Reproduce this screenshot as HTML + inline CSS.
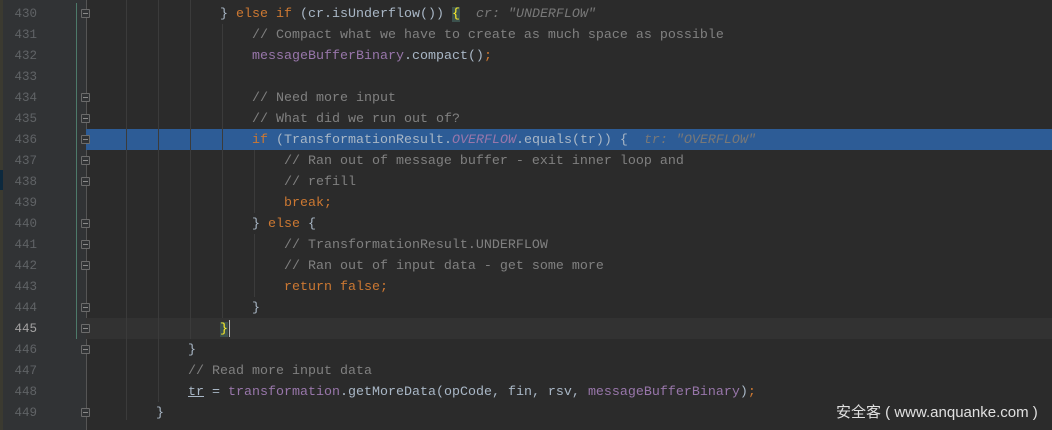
<!DOCTYPE html>
<html><head><meta charset="utf-8"><style>
*{margin:0;padding:0}
body{width:1052px;height:430px;background:#2b2b2b;position:relative;overflow:hidden;font-family:"Liberation Mono",monospace;font-size:13.33px}
.gut{position:absolute;left:0;top:0;width:86px;height:430px;background:#313335}
.strip{position:absolute;left:0;width:3px}
.ln{position:absolute;left:0;width:37px;text-align:right;color:#606366;font-size:12.5px;height:21px;line-height:21px;padding-top:1px}
.row{position:absolute;left:86px;right:0;height:21px}
.code{position:absolute;left:124px;white-space:pre;color:#a9b7c6;line-height:21px;height:21px;padding-top:1px}
.k{color:#cc7832}.c{color:#808080}.f{color:#9876aa}.i{color:#9876aa;font-style:italic}.h{color:#787878;font-style:italic}
.g{position:absolute;width:1px;background:#3b3b3b}
.fold{position:absolute;left:81px;width:9px;height:9px;border:1px solid #6b6b6b;border-radius:1px;box-sizing:border-box;background:#313335}
.fold:after{content:"";position:absolute;left:1px;top:3px;width:5px;height:1px;background:#8a8a8a}
</style></head><body>
<div class="gut"></div>
<div class="strip" style="top:0;height:170px;background:#3b3a30"></div>
<div class="strip" style="top:170px;height:20px;background:#0d293e"></div>
<div class="strip" style="top:190px;height:240px;background:#3b3a30"></div>
<div style="position:absolute;left:76px;top:3px;width:1px;height:336px;background:#4d7a6a"></div>
<div style="position:absolute;left:86px;top:0;width:1px;height:430px;background:#555"></div>
<div class="row" style="top:129px;background:#2d5c96"></div>
<div class="row" style="top:318px;background:#323232"></div>
<div class="g" style="left:126px;top:0;height:420px"></div>
<div class="g" style="left:158px;top:0;height:402px"></div>
<div class="g" style="left:190px;top:0;height:339px"></div>
<div class="g" style="left:222px;top:24px;height:294px"></div>
<div class="g" style="left:254px;top:150px;height:63px"></div>
<div class="g" style="left:254px;top:234px;height:63px"></div>
<div class="fold" style="top:9px"></div>
<div class="fold" style="top:93px"></div>
<div class="fold" style="top:114px"></div>
<div class="fold" style="top:135px"></div>
<div class="fold" style="top:156px"></div>
<div class="fold" style="top:177px"></div>
<div class="fold" style="top:219px"></div>
<div class="fold" style="top:240px"></div>
<div class="fold" style="top:261px"></div>
<div class="fold" style="top:303px"></div>
<div class="fold" style="top:324px"></div>
<div class="fold" style="top:345px"></div>
<div class="fold" style="top:408px"></div>

<div class="ln" style="top:3px">430</div><div class="code" style="top:3px">            } <span class="k">else if</span> (cr.isUnderflow()) <span style="background:#3b514d;color:#ffef28">{</span>  <span class="h">cr: "UNDERFLOW"</span></div>
<div class="ln" style="top:24px">431</div><div class="code" style="top:24px">                <span class="c">// Compact what we have to create as much space as possible</span></div>
<div class="ln" style="top:45px">432</div><div class="code" style="top:45px">                <span class="f">messageBufferBinary</span>.compact()<span class="k">;</span></div>
<div class="ln" style="top:66px">433</div>
<div class="ln" style="top:87px">434</div><div class="code" style="top:87px">                <span class="c">// Need more input</span></div>
<div class="ln" style="top:108px">435</div><div class="code" style="top:108px">                <span class="c">// What did we run out of?</span></div>
<div class="ln" style="top:129px">436</div><div class="code" style="top:129px">                <span class="k">if</span> (TransformationResult.<span class="i">OVERFLOW</span>.equals(tr)) {  <span class="h">tr: "OVERFLOW"</span></div>
<div class="ln" style="top:150px">437</div><div class="code" style="top:150px">                    <span class="c">// Ran out of message buffer - exit inner loop and</span></div>
<div class="ln" style="top:171px">438</div><div class="code" style="top:171px">                    <span class="c">// refill</span></div>
<div class="ln" style="top:192px">439</div><div class="code" style="top:192px">                    <span class="k">break;</span></div>
<div class="ln" style="top:213px">440</div><div class="code" style="top:213px">                } <span class="k">else</span> {</div>
<div class="ln" style="top:234px">441</div><div class="code" style="top:234px">                    <span class="c">// TransformationResult.UNDERFLOW</span></div>
<div class="ln" style="top:255px">442</div><div class="code" style="top:255px">                    <span class="c">// Ran out of input data - get some more</span></div>
<div class="ln" style="top:276px">443</div><div class="code" style="top:276px">                    <span class="k">return false;</span></div>
<div class="ln" style="top:297px">444</div><div class="code" style="top:297px">                }</div>
<div class="ln" style="top:318px;color:#a4a3a3">445</div><div class="code" style="top:318px">            <span style="background:#3b514d;color:#ffef28">}</span></div>
<div style="position:absolute;left:229px;top:320px;width:1px;height:17px;background:#bbb"></div>
<div class="ln" style="top:339px">446</div><div class="code" style="top:339px">        }</div>
<div class="ln" style="top:360px">447</div><div class="code" style="top:360px">        <span class="c">// Read more input data</span></div>
<div class="ln" style="top:381px">448</div><div class="code" style="top:381px">        <span style="text-decoration:underline">tr</span> = <span class="f">transformation</span>.getMoreData(opCode, fin, rsv, <span class="f">messageBufferBinary</span>)<span class="k">;</span></div>
<div class="ln" style="top:402px">449</div><div class="code" style="top:402px">    }</div>
<div style="position:absolute;left:836px;top:401px;color:#e0e0e0;font-family:'Liberation Sans','Noto Sans CJK SC',sans-serif;font-size:15px;white-space:pre">安全客 ( www.anquanke.com )</div>
</body></html>
